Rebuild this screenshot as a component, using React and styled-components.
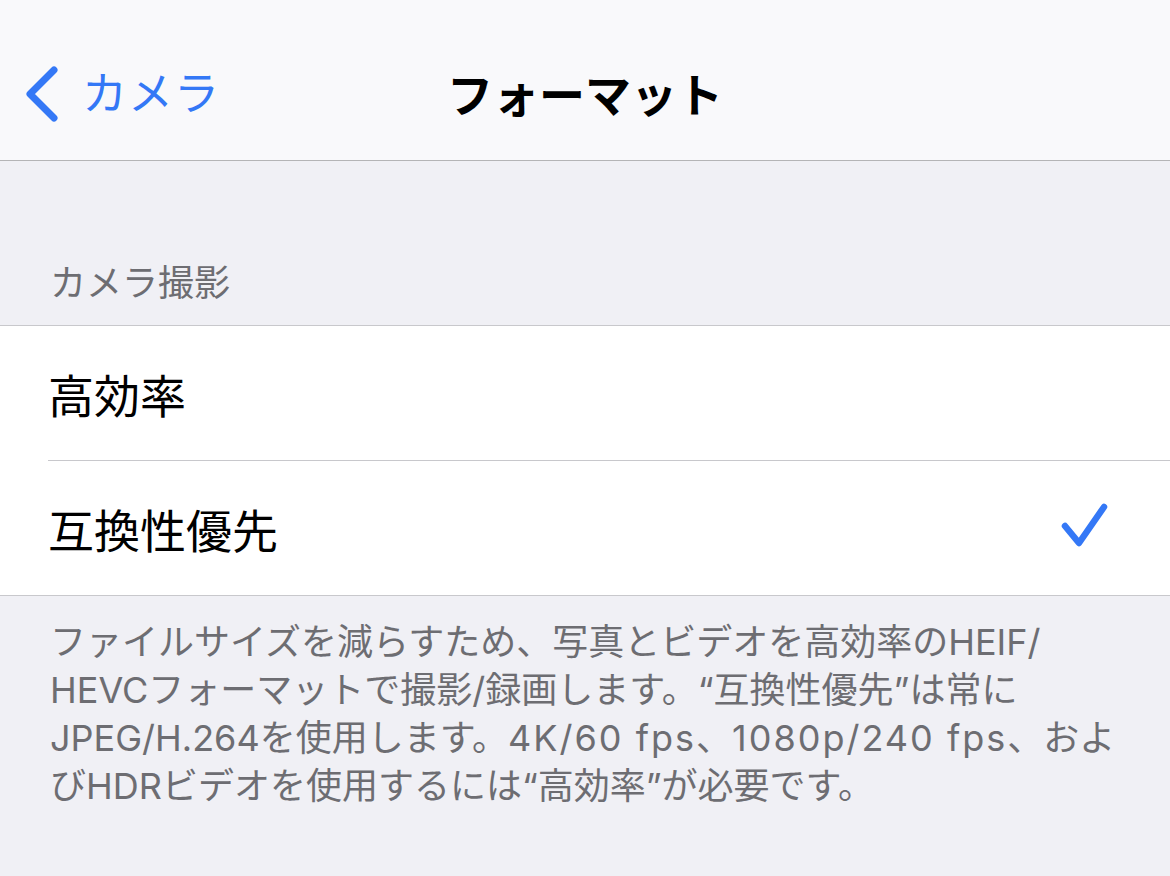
import React from 'react'
import styled, { createGlobalStyle } from 'styled-components'

const GlobalStyle = createGlobalStyle`
  html, body {
    margin: 0;
    padding: 0;
    background: #f0f0f5;
  }
  body {
    font-family: Inter, "Noto Sans CJK JP", sans-serif;
    -webkit-font-smoothing: antialiased;
  }
`

const blue = '#3478f6'

export default function App() {
  return (
    <Page>
      <GlobalStyle />
      <NavBar>
        <BackButton>
          <svg width="40" height="60" viewBox="0 0 40 60">
            <path d="M32 7 L8 31 L32 55" fill="none" stroke={blue} strokeWidth="7" strokeLinecap="round" strokeLinejoin="round" />
          </svg>
          <BackLabel>カメラ</BackLabel>
        </BackButton>
        <NavTitle>フォーマット</NavTitle>
      </NavBar>

      <SectionHeader>カメラ撮影</SectionHeader>

      <List>
        <Row>
          <RowLabel>高効率</RowLabel>
        </Row>
        <Row>
          <RowLabel>互換性優先</RowLabel>
          <svg width="50" height="50" viewBox="0 0 50 50">
            <path d="M5 23 L19 40 L44 4" fill="none" stroke={blue} strokeWidth="6.5" strokeLinecap="round" strokeLinejoin="round" />
          </svg>
        </Row>
      </List>

      <Footer>
        ファイルサイズを減らすため、写真とビデオを高効率のHEIF/<br />
        HEVCフォーマットで撮影/録画します。“互換性優先”は常に<br />
        JPEG/H.264を使用します。<Wide>4K/60 fps</Wide>、<Wide>1080p/240 fps</Wide>、およ<br />
        びHDRビデオを使用するには“高効率”が必要です。
      </Footer>
    </Page>
  )
}

const Page = styled.div`
  width: 1170px;
  min-height: 876px;
  background: #f0f0f5;
`

const NavBar = styled.div`
  position: relative;
  height: 136px;
  padding-top: 24px;
  display: flex;
  align-items: center;
  justify-content: center;
  background: #f9f9fb;
  border-bottom: 1px solid #b4b4b6;
`

const BackButton = styled.div`
  position: absolute;
  left: 22px;
  top: 28px;
  height: 130px;
  display: flex;
  align-items: center;
  gap: 20px;
`

const BackLabel = styled.span`
  color: ${blue};
  font-family: "Noto Sans CJK JP", sans-serif;
  font-size: 45px;
  letter-spacing: 1px;
  margin-top: -6px;
`

const NavTitle = styled.div`
  font-family: "Noto Sans CJK JP", sans-serif;
  font-weight: 700;
  font-size: 46px;
  color: #000;
`

const SectionHeader = styled.div`
  padding: 97px 50px 0;
  height: 67px;
  font-family: "Noto Sans CJK JP", sans-serif;
  font-size: 36px;
  line-height: 44px;
  color: #6d6d72;
`

const List = styled.div`
  background: #fff;
  border-top: 1px solid #c8c8cc;
  border-bottom: 1px solid #c8c8cc;
  padding-left: 48px;
`

const Row = styled.div`
  height: 134px;
  display: flex;
  align-items: center;
  justify-content: space-between;
  padding-right: 60px;
  & + & {
    border-top: 1px solid #c8c8cc;
  }
`

const RowLabel = styled.span`
  font-family: "Noto Sans CJK JP", sans-serif;
  font-size: 46px;
  color: #000;
`

const Footer = styled.p`
  margin: 0;
  padding: 22px 50px 40px;
  font-size: 36px;
  line-height: 48px;
  color: #6d6d72;
`

const Wide = styled.span`
  letter-spacing: 2px;
`
